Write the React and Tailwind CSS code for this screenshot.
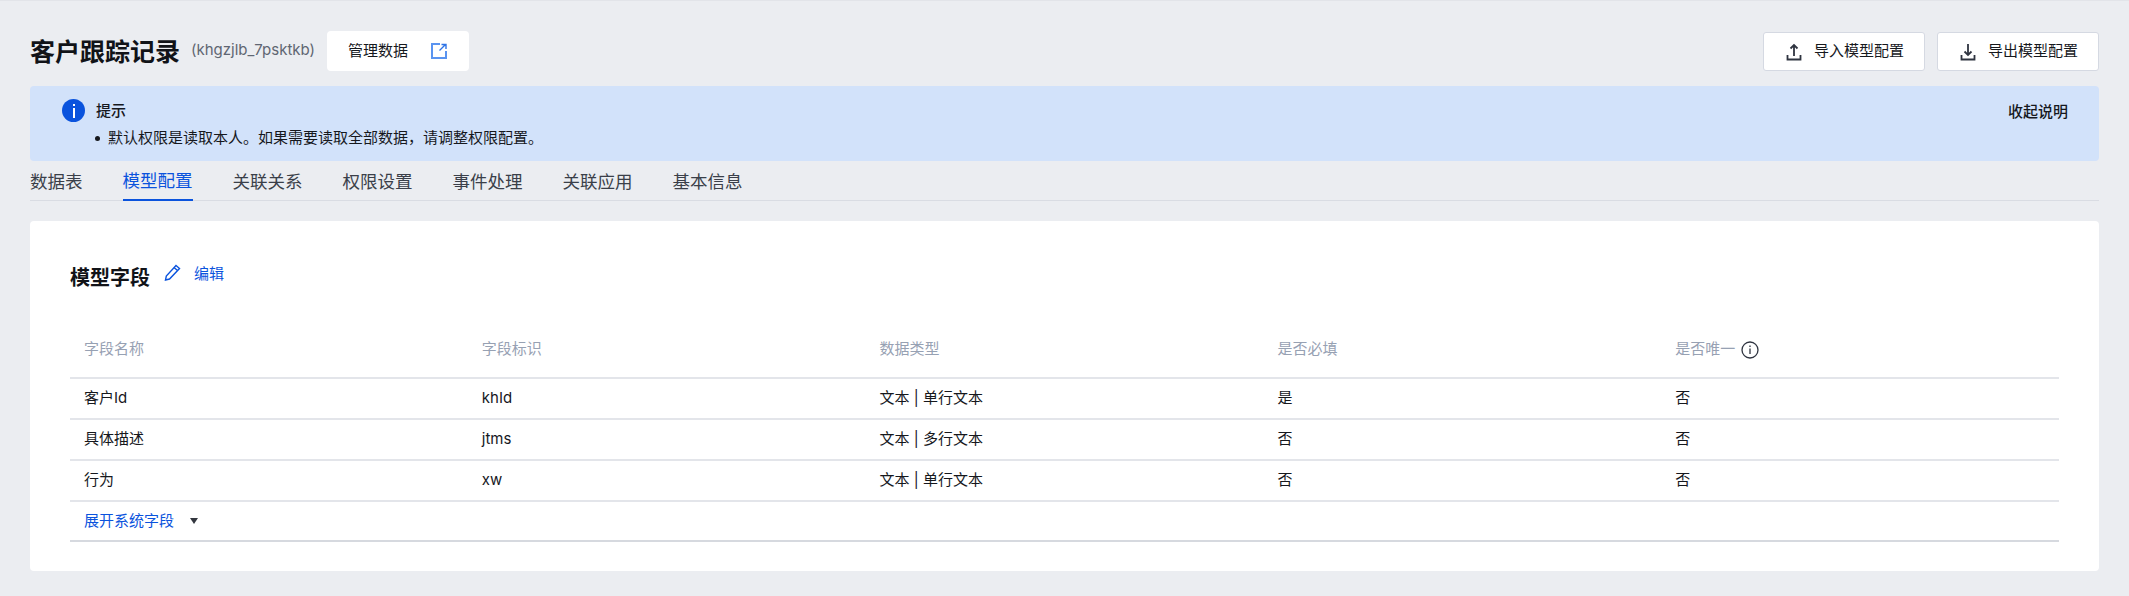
const FONT = "font-['Inter','Noto_Sans_CJK_SC',sans-serif]";

const tabs = ["数据表", "模型配置", "关联关系", "权限设置", "事件处理", "关联应用", "基本信息"];
const rows = [
  ["客户Id", "khId", "文本 | 单行文本", "是", "否"],
  ["具体描述", "jtms", "文本 | 多行文本", "否", "否"],
  ["行为", "xw", "文本 | 单行文本", "否", "否"],
];

function UploadIcon({ down }) {
  return (
    <svg width="22" height="22" viewBox="0 0 22 22" fill="none" stroke="#2f3440" strokeWidth="1.8">
      <path d="M4.500 14v4.500h13V14" />
      {down ? <path d="M11 3v11M7.500 10.500l3.500 3.500 3.500-3.500" /> : <path d="M11 15V4M7.500 7.500L11 4l3.500 3.500" />}
    </svg>
  );
}

function OutButton({ down, children }) {
  return (
    <button className="mt-[1px] flex h-[39px] w-[162px] items-center gap-[9px] rounded-[3px] border border-[#d5d9e2] bg-white pl-[19px] text-[15px] text-[#16181d]">
      <UploadIcon down={down} />
      {children}
    </button>
  );
}

export default function App() {
  return (
    <div className={`${FONT} h-[596px] w-[2129px] overflow-hidden border-t border-[#e2e4e9] bg-[#ebedf1] px-[30px] text-[#16181d]`}>
      <div className="flex h-[85px] items-start justify-between pt-[30px]">
        <div className="flex items-center">
          <h1 className="translate-y-[1px] text-[25px] leading-[40px] font-bold text-[#111318]">客户跟踪记录</h1>
          <span className="ml-[11px] -translate-y-[1px] text-[15px] leading-[40px] text-[#5f6672]">(khgzjlb_7psktkb)</span>
          <button className="ml-[12px] flex h-[40px] w-[142px] items-center rounded-[4px] bg-white pl-[21px] text-[15px] text-[#16181d]">
            管理数据
            <svg className="ml-[22px]" width="18" height="18" viewBox="0 0 18 18" fill="none" stroke="#5a94f0" strokeWidth="2">
              <path d="M10 2H2v14h14V9" />
              <path d="M9.500 8.500L15 3M11.500 2.500H16V7" strokeWidth="1.4" stroke="#2f74e6" />
            </svg>
          </button>
        </div>
        <div className="flex gap-[12px]">
          <OutButton>导入模型配置</OutButton>
          <OutButton down>导出模型配置</OutButton>
        </div>
      </div>

      <div className="flex h-[75px] justify-between rounded-[4px] bg-[#d2e2fa] pl-[32px] pr-[31px] pt-[13px]">
        <div>
          <div className="flex h-[23px] items-center gap-[11px]">
            <span className="flex h-[23px] w-[23px] items-center justify-center rounded-full bg-[#0a53dd]">
              <svg width="4" height="14" viewBox="0 0 4 14" fill="#fff">
                <rect x="1" y="0" width="2" height="2" />
                <rect x="1" y="4" width="2" height="10" />
              </svg>
            </span>
            <span className="translate-y-[1px] text-[15px] font-medium">提示</span>
          </div>
          <div className="mt-[4px] flex items-center pl-[33px] text-[15px] leading-[24px]">
            <span className="mr-[8px] h-[5px] w-[5px] rounded-full bg-[#16181d]" />
            默认权限是读取本人。如果需要读取全部数据，请调整权限配置。
          </div>
        </div>
        <button className="mt-[1px] h-[24px] self-start text-[15px] font-medium">收起说明</button>
      </div>

      <div className="flex h-[40px] gap-[40px] border-b border-[#d9dce3]">
        {tabs.map((t, i) => (
          <div
            key={t}
            className={
              i === 1
                ? "flex h-[40px] items-center border-b-[2px] border-[#0a53dd] pt-[2px] text-[17.5px] text-[#0a53dd]"
                : "flex h-[40px] items-center pt-[2px] text-[17.5px] text-[#3a3f49]"
            }
          >
            {t}
          </div>
        ))}
      </div>

      <div className="mt-[20px] h-[350px] rounded-[4px] bg-white px-[40px] pt-[36px]">
        <div className="flex h-[40px] items-center">
          <h2 className="translate-y-[1px] text-[20px] font-bold text-[#111318]">模型字段</h2>
          <svg className="ml-[14px] -translate-y-[5px]" width="17" height="17" viewBox="0 0 17 17" fill="none" stroke="#0a53dd" strokeWidth="1.4">
            <path d="M12 1.500l3.500 3L5.500 15 1.500 16l.8-4zM10 3.500l3.500 3" />
          </svg>
          <span className="ml-[13px] -translate-y-[3px] text-[15px] text-[#0a53dd]">编辑</span>
        </div>

        <div className="mt-[25px] grid h-[57px] grid-cols-5 items-center border-b-2 border-[#e3e5ea] text-[15px] text-[#97a1b3]">
          {["字段名称", "字段标识", "数据类型", "是否必填"].map((h) => (
            <div key={h} className="pl-[14px]">{h}</div>
          ))}
          <div className="flex items-center gap-[6px] pl-[14px]">
            是否唯一
            <svg width="18" height="18" viewBox="0 0 18 18" fill="none" stroke="#2f3440" strokeWidth="1.3">
              <circle cx="9" cy="9" r="8" />
              <path d="M9 7.500V13M9 4.500V6" />
            </svg>
          </div>
        </div>

        {rows.map((r) => (
          <div key={r[0]} className="grid h-[41px] grid-cols-5 items-center border-b-2 border-[#e3e5ea] text-[15px] text-[#16181d]">
            {r.map((c, i) => (
              <div key={i} className="pl-[14px]">{c}</div>
            ))}
          </div>
        ))}

        <div className="flex h-[40px] items-center border-b-2 border-[#d6d9df] pl-[14px] text-[15px] text-[#0a53dd]">
          展开系统字段
          <svg className="ml-[16px]" width="8" height="6" viewBox="0 0 8 6" fill="#33373f">
            <path d="M0 0h8L4 6z" />
          </svg>
        </div>
      </div>
    </div>
  );
}
